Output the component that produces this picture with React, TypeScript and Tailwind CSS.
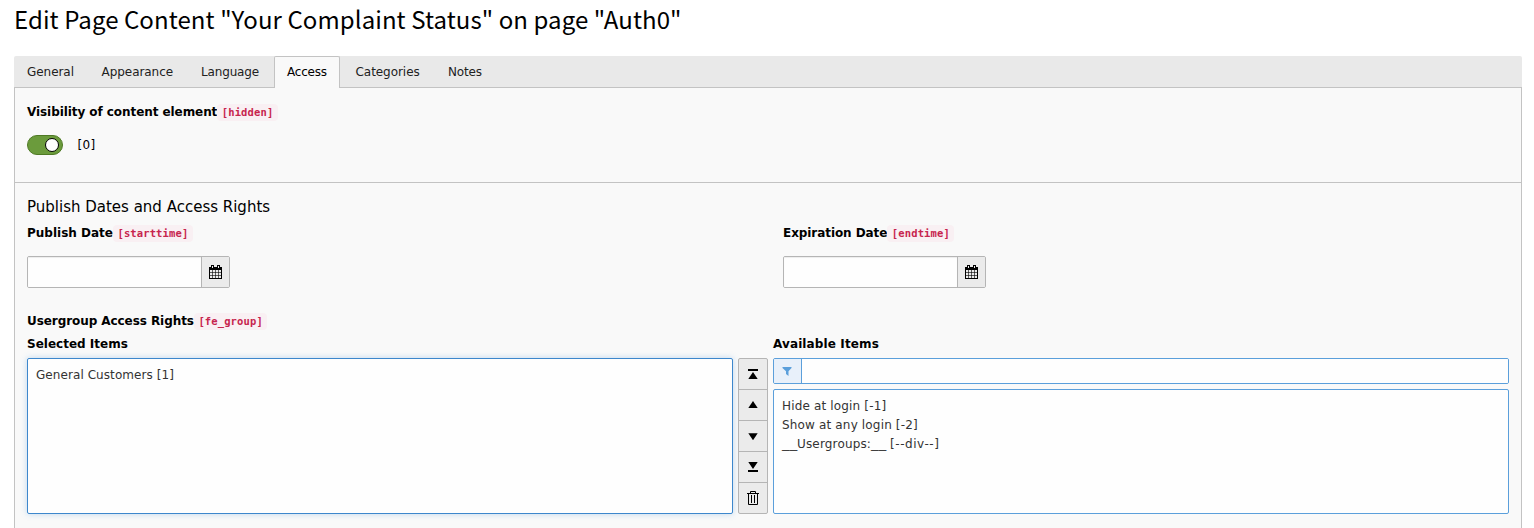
import type { ReactNode } from "react";

const tabs = [
  { label: "General", box: "w-[73px] pl-[13px] tracking-[-0.05px]" },
  { label: "Appearance", box: "w-[100px] pl-[14.5px] tracking-[-0.05px]" },
  { label: "Language", box: "w-[87px] pl-[14px] tracking-[-0.15px]" },
  { label: "Access", box: "w-[66px] pl-3 tracking-[-0.2px]", active: true },
  { label: "Categories", box: "w-[94px] pl-[15.5px] tracking-[-0.05px]" },
  { label: "Notes", box: "w-[62px] pl-[14px] tracking-[-0.15px]" },
];

function Label({ text, code, tracking = "tracking-[-0.07px]" }: { text: string; code?: string; tracking?: string }) {
  return (
    <div className="flex h-4 items-center font-['DejaVu_Sans',sans-serif] text-[12px] leading-4 font-bold whitespace-nowrap text-black">
      <span className={tracking}>{text}</span>
      {code && (
        <code className="h-[17px] rounded-sm bg-[#f9f0f3] px-[4.5px] font-['DejaVu_Sans_Mono',monospace] text-[10.5px] leading-[17px] font-bold tracking-[0.12px] text-[#c7254e]">
          [{code}]
        </code>
      )}
    </div>
  );
}

function CalendarIcon() {
  return (
    <svg width="13" height="14" viewBox="0 0 13 14">
      <path d="M0 2h2V0h3v2h3V0h3v2h2v12H0z" fill="#000" />
      <path d="M3 1h1v2H3zM9 1h1v2H9zM1 5h11v8H1z" fill="#ebebeb" />
      <path
        d="M3.500 5v8M6.500 5v8M9.500 5v8M1 7.500h11M1 10.500h11"
        stroke="#000"
        strokeOpacity="0.6"
        strokeWidth="1"
      />
    </svg>
  );
}

function DateInput() {
  return (
    <div className="flex h-8 w-[203px] overflow-hidden rounded-xs border border-[#b5b5b5]">
      <input className="w-[173px] bg-[#fefefe] px-2 shadow-[inset_0_1px_1px_rgba(0,0,0,0.07)] outline-none" />
      <button className="flex flex-1 items-center justify-start border-l border-[#b5b5b5] bg-[#ebebeb] pl-[7px]">
        <CalendarIcon />
      </button>
    </div>
  );
}

function Underscores() {
  return <span className="inline-block w-[15px] origin-left scale-x-125">__</span>;
}

const moveIcons: ReactNode[] = [
  <path key="top" d="M3 3h10v2H3zM8 6l4.700 7H3.300z" />,
  <path key="up" d="M8 4l4.700 7H3.300z" />,
  <path key="down" d="M8 12.300L3.300 5.300h9.400z" />,
  <path key="bottom" d="M8 10L3.300 3h9.400zM3 11h10v2H3z" />,
  <path
    key="trash"
    d="M6 1h4a1 1 0 0 1 1 1v1h3v1h-1v10a1 1 0 0 1-1 1H4a1 1 0 0 1-1-1V4H2V3h3V2a1 1 0 0 1 1-1zm0 1v1h4V2zM4 4v10h8V4zM6 5h1v8H6zM9 5h1v8H9z"
    fillRule="evenodd"
  />,
];

export default function App() {
  return (
    <div className="h-[528px] overflow-hidden bg-white pr-3 pl-[14px] font-['DejaVu_Sans',sans-serif] text-[12px] text-black">
      <h1 className="h-14 pt-px font-['Noto_Sans_CJK_SC',sans-serif] text-[24px] leading-9 tracking-[0.08px] whitespace-nowrap">
        Edit Page Content "Your Complaint Status" on page "Auth0"
      </h1>
      <div className="flex h-8 rounded-t-xs border-b border-[#c3c3c3] bg-[#e9e9e9]">
        {tabs.map((t) => (
          <div
            key={t.label}
            className={`shrink-0 whitespace-nowrap ${t.box} ${
              t.active
                ? "h-8 rounded-t-xs border border-b-0 border-[#c3c3c3] bg-[#f9f9f9] leading-[31px] text-black"
                : "leading-[33px] text-[#212121]"
            }`}
          >
            {t.label}
          </div>
        ))}
      </div>
      <div className="h-[440px] border-x border-[#c3c3c3] bg-[#f9f9f9]">
        <section className="h-[95px] border-b border-[#c3c3c3] px-3 pt-4">
          <Label text="Visibility of content element" code="hidden" />
          <div className="mt-[15px] flex h-5 items-center">
            <div className="flex h-5 w-9 items-center justify-end rounded-full border border-[#4f7a25] bg-[#6b9b3c] pr-[3px]">
              <div className="size-[14px] rounded-full border border-black bg-white" />
            </div>
            <span className="ml-[14.5px] tracking-[0.4px]">[0]</span>
          </div>
        </section>
        <section className="px-3 pt-[13px]">
          <h2 className="h-[29px] text-[15px] leading-[22px]">Publish Dates and Access Rights</h2>
          <div className="grid grid-cols-[756px_1fr]">
            <div className="flex flex-col gap-[15px]">
              <Label text="Publish Date" code="starttime" tracking="tracking-normal" />
              <DateInput />
            </div>
            <div className="flex flex-col gap-[15px]">
              <Label text="Expiration Date" code="endtime" />
              <DateInput />
            </div>
          </div>
          <div className="mt-[25px]">
            <Label text="Usergroup Access Rights" code="fe_group" />
          </div>
          <div className="mt-[7px] flex">
            <div className="w-[706px]">
              <Label text="Selected Items" tracking="tracking-normal" />
              <div className="mt-[6px] h-[156px] rounded-xs border border-[#3d87cc] bg-[#fefefe] px-2 pt-[7px] leading-[19px] tracking-[0.07px] text-[#333] shadow-[0_0_6px_rgba(80,155,220,0.35)]">
                General Customers [1]
              </div>
            </div>
            <div className="mt-[22px] ml-[5px] flex h-[156px] w-[30px] flex-col divide-y divide-[#b5b5b5] overflow-hidden rounded-xs border border-[#b5b5b5] bg-[#ebebeb]">
              {moveIcons.map((icon, i) => (
                <button key={i} className="flex h-[31px] shrink-0 items-start justify-center pt-[7px]">
                  <svg width="16" height="16" viewBox="0 0 16 16">
                    {icon}
                  </svg>
                </button>
              ))}
            </div>
            <div className="ml-[5px] w-[736px]">
              <Label text="Available Items" tracking="tracking-[0.12px]" />
              <div className="mt-[6px] flex h-[26px] overflow-hidden rounded-xs border border-[#5b9fdb]">
                <span className="flex w-7 items-center justify-start border-r border-[#5b9fdb] bg-[#e8f0fa] pl-2">
                  <svg width="10" height="10" viewBox="0 0 10 10" fill="#5b9fdb">
                    <path d="M.5 1h9v1L6.500 5.200V10L4 8V5.200L.5 2z" />
                  </svg>
                </span>
                <input className="flex-1 bg-[#fefefe] outline-none" />
              </div>
              <div className="mt-[5px] h-[125px] rounded-xs border border-[#5b9fdb] bg-[#fefefe] px-2 pt-[7px] leading-[19px] tracking-[0.16px] text-[#333]">
                <div>Hide at login [-1]</div>
                <div>Show at any login [-2]</div>
                <div className="whitespace-nowrap">
                  <Underscores />
                  Usergroups:
                  <Underscores /> <span className="tracking-[0.55px]">[--div--]</span>
                </div>
              </div>
            </div>
          </div>
        </section>
      </div>
    </div>
  );
}
